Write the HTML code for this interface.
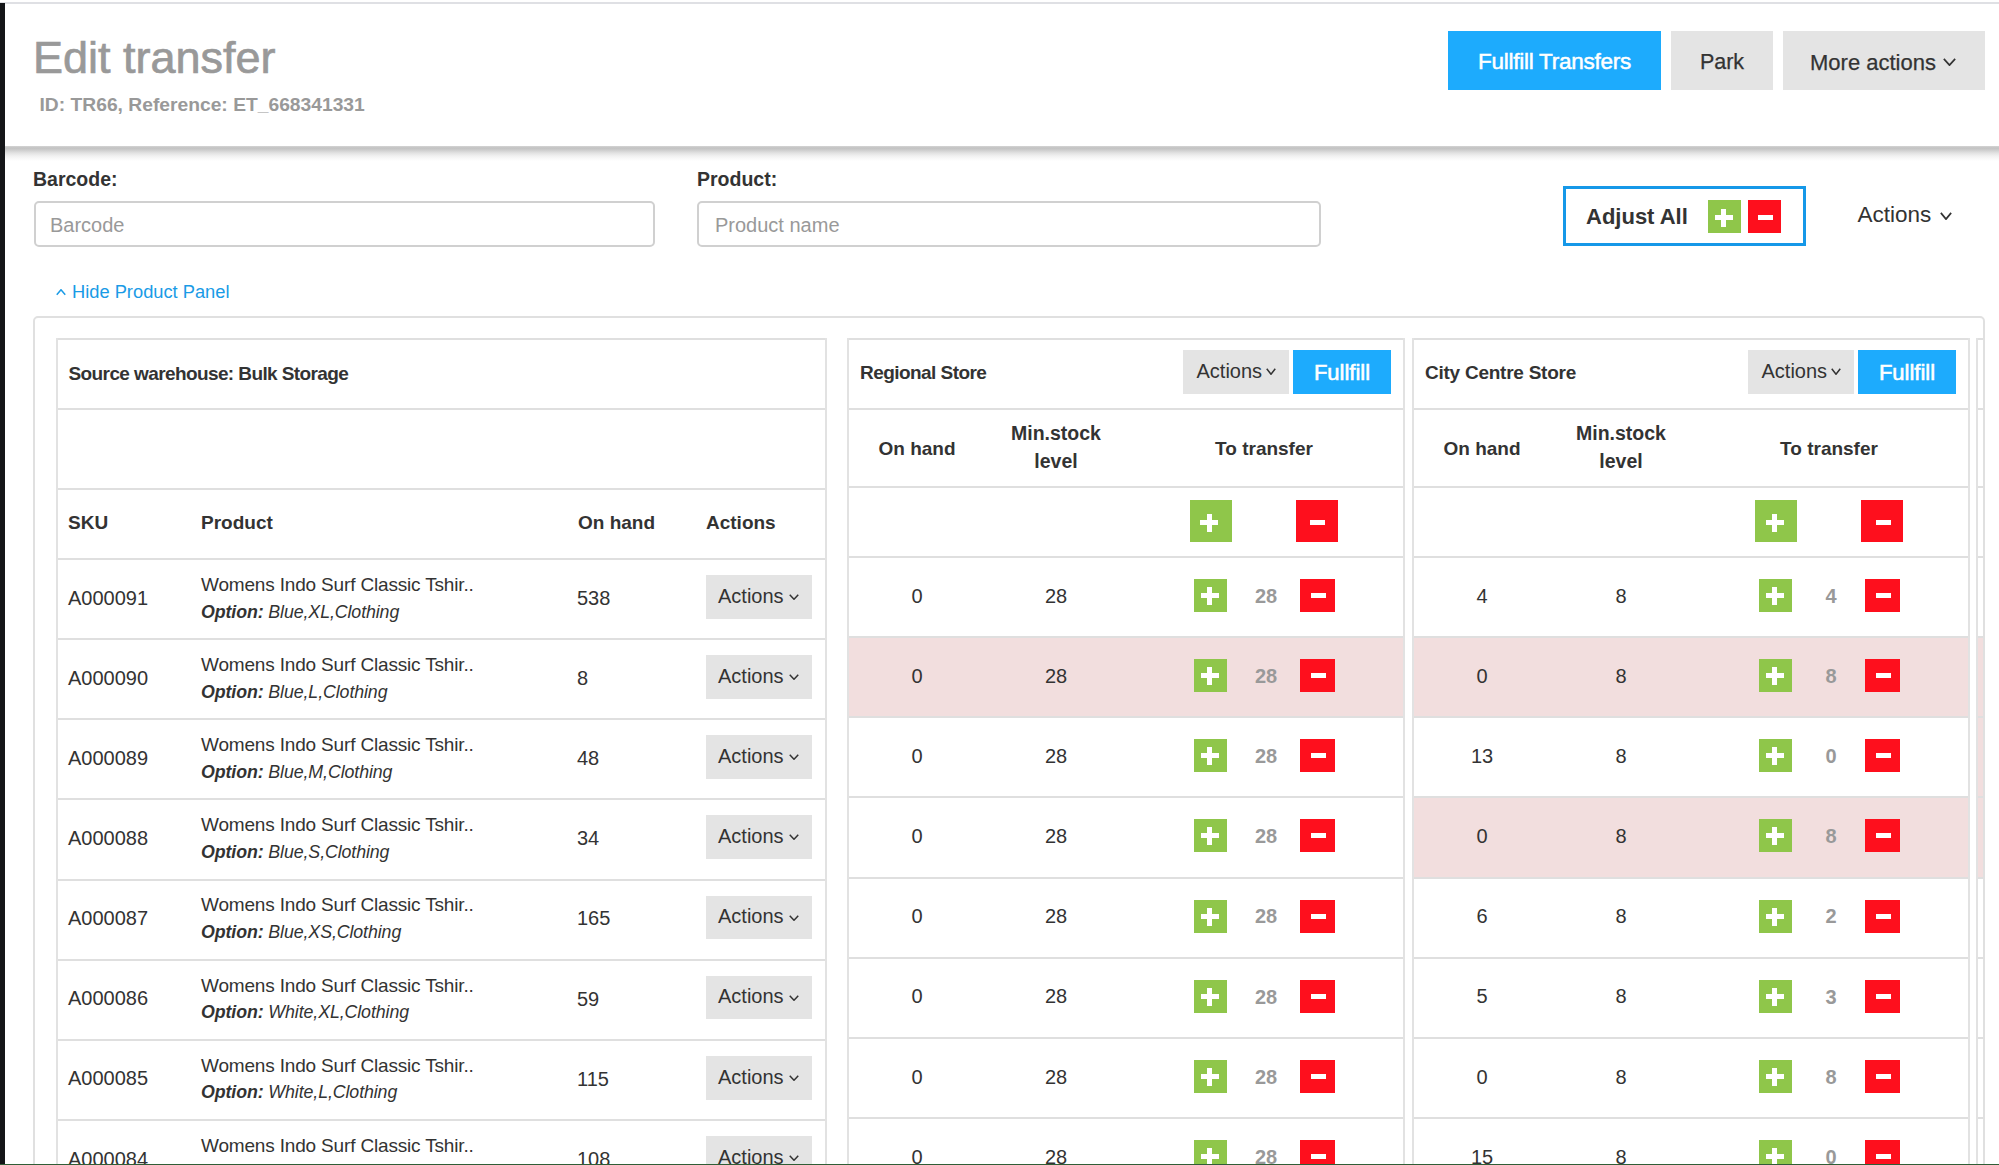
<!DOCTYPE html>
<html><head><meta charset="utf-8"><style>
html,body{margin:0;padding:0;}
body{width:1999px;height:1165px;overflow:hidden;position:relative;background:#fff;font-family:"Liberation Sans", sans-serif;color:#333;}
.t{position:absolute;white-space:nowrap;line-height:1;}
.r{position:absolute;}
</style></head><body>
<div class="r" style="left:0px;top:2px;width:1999px;height:2px;background:#dfe0e4;"></div>
<div class="r" style="left:5px;top:146px;width:1994px;height:15px;background:linear-gradient(#d4d4d4 0px,#c2c2c2 2px,#cdcdcd 4px,#e2e2e2 7px,#f1f1f1 10px,#fafafa 13px,#fff 15px);"></div>
<div class="t" style="left:33.00px;top:35.40px;font-size:45px;color:#999;-webkit-text-stroke:0.7px #999;">Edit transfer</div>
<div class="t" style="left:39.50px;top:95.00px;font-size:19.25px;font-weight:700;color:#999;">ID: TR66, Reference: ET_668341331</div>
<div class="r" style="left:1448px;top:31px;width:213px;height:59px;background:#1dabfd;"></div>
<div class="t" style="left:1448.00px;width:213px;text-align:center;top:51.25px;font-size:22.5px;color:#fff;letter-spacing:-0.25px;-webkit-text-stroke:0.5px #fff;">Fullfill Transfers</div>
<div class="r" style="left:1671px;top:31px;width:102px;height:59px;background:#e4e4e4;"></div>
<div class="t" style="left:1671.00px;width:102px;text-align:center;top:52.10px;font-size:21.5px;-webkit-text-stroke:0.25px #333;">Park</div>
<div class="r" style="left:1783px;top:31px;width:202px;height:59px;background:#e4e4e4;"></div>
<div class="t" style="left:1810.00px;top:51.67px;font-size:22px;-webkit-text-stroke:0.25px #333;">More actions</div>
<svg class="r" style="left:1943px;top:58px" width="13" height="8" viewBox="0 0 13 8"><path d="M0.85 0.85 L6.5 7.15 L12.15 0.85" fill="none" stroke="#333" stroke-width="1.7"/></svg>
<div class="t" style="left:33.00px;top:169.99px;font-size:19.5px;font-weight:700;">Barcode:</div>
<div class="r" style="left:34px;top:201px;width:621px;height:46px;background:#fff;box-sizing:border-box;border:2px solid #d0d0d0;border-radius:5px;"></div>
<div class="t" style="left:50.00px;top:215.07px;font-size:20px;color:#999;">Barcode</div>
<div class="t" style="left:697.00px;top:169.99px;font-size:19.5px;font-weight:700;">Product:</div>
<div class="r" style="left:697px;top:201px;width:624px;height:46px;background:#fff;box-sizing:border-box;border:2px solid #d0d0d0;border-radius:5px;"></div>
<div class="t" style="left:715.00px;top:215.07px;font-size:20px;color:#999;">Product name</div>
<div class="r" style="left:1563px;top:186px;width:243px;height:60px;background:transparent;box-sizing:border-box;border:3px solid #1598e8;"></div>
<div class="t" style="left:1586.00px;top:206.37px;font-size:22px;font-weight:700;">Adjust All</div>
<div class="r" style="left:1708px;top:200px;width:33px;height:33px;background:#8fc64a;"></div>
<div class="r" style="left:1715px;top:215px;width:18px;height:5px;background:#fff;"></div>
<div class="r" style="left:1721px;top:209px;width:5px;height:18px;background:#fff;"></div>
<div class="r" style="left:1748px;top:200px;width:33px;height:33px;background:#fe0f1d;"></div>
<div class="r" style="left:1758px;top:215px;width:15px;height:5px;background:#fff;"></div>
<div class="t" style="left:1857.50px;top:203.95px;font-size:22.5px;">Actions</div>
<svg class="r" style="left:1940px;top:212px" width="12" height="8" viewBox="0 0 12 8"><path d="M0.85 0.85 L6.0 7.15 L11.15 0.85" fill="none" stroke="#333" stroke-width="1.7"/></svg>
<svg class="r" style="left:56px;top:289px" width="10" height="6.5" viewBox="0 0 10 6.5"><path d="M0.75 5.75 L5.0 0.75 L9.25 5.75" fill="none" stroke="#1a9be6" stroke-width="1.5"/></svg>
<div class="t" style="left:72.00px;top:282.91px;font-size:18.3px;color:#1a9be6;">Hide Product Panel</div>
<div class="r" style="left:33px;top:316px;width:1952px;height:884px;background:#fff;box-sizing:border-box;border:2px solid #e0e0e0;border-radius:5px;"></div>
<div class="r" style="left:56px;top:338px;width:771px;height:2px;background:#dfdfdf;"></div>
<div class="r" style="left:56px;top:408px;width:771px;height:2px;background:#dfdfdf;"></div>
<div class="r" style="left:56px;top:488px;width:771px;height:2px;background:#dfdfdf;"></div>
<div class="r" style="left:56px;top:558px;width:771px;height:2px;background:#dfdfdf;"></div>
<div class="r" style="left:56px;top:638px;width:771px;height:2px;background:#dfdfdf;"></div>
<div class="r" style="left:56px;top:718px;width:771px;height:2px;background:#dfdfdf;"></div>
<div class="r" style="left:56px;top:798px;width:771px;height:2px;background:#dfdfdf;"></div>
<div class="r" style="left:56px;top:879px;width:771px;height:2px;background:#dfdfdf;"></div>
<div class="r" style="left:56px;top:959px;width:771px;height:2px;background:#dfdfdf;"></div>
<div class="r" style="left:56px;top:1039px;width:771px;height:2px;background:#dfdfdf;"></div>
<div class="r" style="left:56px;top:1119px;width:771px;height:2px;background:#dfdfdf;"></div>
<div class="r" style="left:56px;top:338px;width:2px;height:827px;background:#e2e2e2;"></div>
<div class="r" style="left:825px;top:338px;width:2px;height:827px;background:#e2e2e2;"></div>
<div class="t" style="left:68.50px;top:363.91px;font-size:19px;font-weight:700;letter-spacing:-0.6px;">Source warehouse: Bulk Storage</div>
<div class="t" style="left:68.00px;top:513.41px;font-size:19px;font-weight:700;">SKU</div>
<div class="t" style="left:201.00px;top:513.41px;font-size:19px;font-weight:700;">Product</div>
<div class="t" style="left:578.00px;top:513.41px;font-size:19px;font-weight:700;">On hand</div>
<div class="t" style="left:706.00px;top:513.41px;font-size:19px;font-weight:700;">Actions</div>
<div class="t" style="left:68.00px;top:587.57px;font-size:20px;">A000091</div>
<div class="t" style="left:201.00px;top:574.91px;font-size:19px;letter-spacing:-0.17px;">Womens Indo Surf Classic Tshir..</div>
<div class="t" style="left:201.00px;top:603.63px;font-size:17.8px;font-style:italic;letter-spacing:-0.1px;"><b>Option:</b> Blue,XL,Clothing</div>
<div class="t" style="left:577.00px;top:587.87px;font-size:20px;">538</div>
<div class="r" style="left:706px;top:575px;width:106px;height:44px;background:#e4e4e4;"></div>
<div class="t" style="left:718.00px;top:585.77px;font-size:20px;">Actions</div>
<svg class="r" style="left:789px;top:594px" width="10" height="6" viewBox="0 0 10 6"><path d="M0.75 0.75 L5.0 5.25 L9.25 0.75" fill="none" stroke="#333" stroke-width="1.5"/></svg>
<div class="t" style="left:68.00px;top:667.71px;font-size:20px;">A000090</div>
<div class="t" style="left:201.00px;top:655.05px;font-size:19px;letter-spacing:-0.17px;">Womens Indo Surf Classic Tshir..</div>
<div class="t" style="left:201.00px;top:683.77px;font-size:17.8px;font-style:italic;letter-spacing:-0.1px;"><b>Option:</b> Blue,L,Clothing</div>
<div class="t" style="left:577.00px;top:668.01px;font-size:20px;">8</div>
<div class="r" style="left:706px;top:655px;width:106px;height:44px;background:#e4e4e4;"></div>
<div class="t" style="left:718.00px;top:665.91px;font-size:20px;">Actions</div>
<svg class="r" style="left:789px;top:674px" width="10" height="6" viewBox="0 0 10 6"><path d="M0.75 0.75 L5.0 5.25 L9.25 0.75" fill="none" stroke="#333" stroke-width="1.5"/></svg>
<div class="t" style="left:68.00px;top:747.85px;font-size:20px;">A000089</div>
<div class="t" style="left:201.00px;top:735.19px;font-size:19px;letter-spacing:-0.17px;">Womens Indo Surf Classic Tshir..</div>
<div class="t" style="left:201.00px;top:763.91px;font-size:17.8px;font-style:italic;letter-spacing:-0.1px;"><b>Option:</b> Blue,M,Clothing</div>
<div class="t" style="left:577.00px;top:748.15px;font-size:20px;">48</div>
<div class="r" style="left:706px;top:735px;width:106px;height:44px;background:#e4e4e4;"></div>
<div class="t" style="left:718.00px;top:746.05px;font-size:20px;">Actions</div>
<svg class="r" style="left:789px;top:754px" width="10" height="6" viewBox="0 0 10 6"><path d="M0.75 0.75 L5.0 5.25 L9.25 0.75" fill="none" stroke="#333" stroke-width="1.5"/></svg>
<div class="t" style="left:68.00px;top:827.99px;font-size:20px;">A000088</div>
<div class="t" style="left:201.00px;top:815.33px;font-size:19px;letter-spacing:-0.17px;">Womens Indo Surf Classic Tshir..</div>
<div class="t" style="left:201.00px;top:844.05px;font-size:17.8px;font-style:italic;letter-spacing:-0.1px;"><b>Option:</b> Blue,S,Clothing</div>
<div class="t" style="left:577.00px;top:828.29px;font-size:20px;">34</div>
<div class="r" style="left:706px;top:815px;width:106px;height:44px;background:#e4e4e4;"></div>
<div class="t" style="left:718.00px;top:826.19px;font-size:20px;">Actions</div>
<svg class="r" style="left:789px;top:834px" width="10" height="6" viewBox="0 0 10 6"><path d="M0.75 0.75 L5.0 5.25 L9.25 0.75" fill="none" stroke="#333" stroke-width="1.5"/></svg>
<div class="t" style="left:68.00px;top:908.13px;font-size:20px;">A000087</div>
<div class="t" style="left:201.00px;top:895.47px;font-size:19px;letter-spacing:-0.17px;">Womens Indo Surf Classic Tshir..</div>
<div class="t" style="left:201.00px;top:924.19px;font-size:17.8px;font-style:italic;letter-spacing:-0.1px;"><b>Option:</b> Blue,XS,Clothing</div>
<div class="t" style="left:577.00px;top:908.43px;font-size:20px;">165</div>
<div class="r" style="left:706px;top:896px;width:106px;height:43px;background:#e4e4e4;"></div>
<div class="t" style="left:718.00px;top:906.33px;font-size:20px;">Actions</div>
<svg class="r" style="left:789px;top:915px" width="10" height="6" viewBox="0 0 10 6"><path d="M0.75 0.75 L5.0 5.25 L9.25 0.75" fill="none" stroke="#333" stroke-width="1.5"/></svg>
<div class="t" style="left:68.00px;top:988.27px;font-size:20px;">A000086</div>
<div class="t" style="left:201.00px;top:975.61px;font-size:19px;letter-spacing:-0.17px;">Womens Indo Surf Classic Tshir..</div>
<div class="t" style="left:201.00px;top:1004.33px;font-size:17.8px;font-style:italic;letter-spacing:-0.1px;"><b>Option:</b> White,XL,Clothing</div>
<div class="t" style="left:577.00px;top:988.57px;font-size:20px;">59</div>
<div class="r" style="left:706px;top:976px;width:106px;height:43px;background:#e4e4e4;"></div>
<div class="t" style="left:718.00px;top:986.47px;font-size:20px;">Actions</div>
<svg class="r" style="left:789px;top:995px" width="10" height="6" viewBox="0 0 10 6"><path d="M0.75 0.75 L5.0 5.25 L9.25 0.75" fill="none" stroke="#333" stroke-width="1.5"/></svg>
<div class="t" style="left:68.00px;top:1068.41px;font-size:20px;">A000085</div>
<div class="t" style="left:201.00px;top:1055.75px;font-size:19px;letter-spacing:-0.17px;">Womens Indo Surf Classic Tshir..</div>
<div class="t" style="left:201.00px;top:1084.47px;font-size:17.8px;font-style:italic;letter-spacing:-0.1px;"><b>Option:</b> White,L,Clothing</div>
<div class="t" style="left:577.00px;top:1068.71px;font-size:20px;">115</div>
<div class="r" style="left:706px;top:1056px;width:106px;height:44px;background:#e4e4e4;"></div>
<div class="t" style="left:718.00px;top:1066.61px;font-size:20px;">Actions</div>
<svg class="r" style="left:789px;top:1075px" width="10" height="6" viewBox="0 0 10 6"><path d="M0.75 0.75 L5.0 5.25 L9.25 0.75" fill="none" stroke="#333" stroke-width="1.5"/></svg>
<div class="t" style="left:68.00px;top:1148.55px;font-size:20px;">A000084</div>
<div class="t" style="left:201.00px;top:1135.89px;font-size:19px;letter-spacing:-0.17px;">Womens Indo Surf Classic Tshir..</div>
<div class="t" style="left:201.00px;top:1164.61px;font-size:17.8px;font-style:italic;letter-spacing:-0.1px;"><b>Option:</b> White,M,Clothing</div>
<div class="t" style="left:577.00px;top:1148.85px;font-size:20px;">108</div>
<div class="r" style="left:706px;top:1136px;width:106px;height:44px;background:#e4e4e4;"></div>
<div class="t" style="left:718.00px;top:1146.75px;font-size:20px;">Actions</div>
<svg class="r" style="left:789px;top:1155px" width="10" height="6" viewBox="0 0 10 6"><path d="M0.75 0.75 L5.0 5.25 L9.25 0.75" fill="none" stroke="#333" stroke-width="1.5"/></svg>
<div class="r" style="left:847px;top:638px;width:558px;height:78px;background:#f2dede;"></div>
<div class="r" style="left:847px;top:338px;width:558px;height:2px;background:#dfdfdf;"></div>
<div class="r" style="left:847px;top:408px;width:558px;height:2px;background:#dfdfdf;"></div>
<div class="r" style="left:847px;top:486px;width:558px;height:2px;background:#dfdfdf;"></div>
<div class="r" style="left:847px;top:556px;width:558px;height:2px;background:#dfdfdf;"></div>
<div class="r" style="left:847px;top:636px;width:558px;height:2px;background:#dfdfdf;"></div>
<div class="r" style="left:847px;top:716px;width:558px;height:2px;background:#dfdfdf;"></div>
<div class="r" style="left:847px;top:796px;width:558px;height:2px;background:#dfdfdf;"></div>
<div class="r" style="left:847px;top:877px;width:558px;height:2px;background:#dfdfdf;"></div>
<div class="r" style="left:847px;top:957px;width:558px;height:2px;background:#dfdfdf;"></div>
<div class="r" style="left:847px;top:1037px;width:558px;height:2px;background:#dfdfdf;"></div>
<div class="r" style="left:847px;top:1117px;width:558px;height:2px;background:#dfdfdf;"></div>
<div class="r" style="left:847px;top:338px;width:2px;height:827px;background:#e2e2e2;"></div>
<div class="r" style="left:1403px;top:338px;width:2px;height:827px;background:#e2e2e2;"></div>
<div class="t" style="left:860.00px;top:363.41px;font-size:19px;font-weight:700;letter-spacing:-0.55px;">Regional Store</div>
<div class="r" style="left:1183px;top:350px;width:106px;height:44px;background:#e4e4e4;"></div>
<div class="t" style="left:1196.50px;top:361.17px;font-size:20px;">Actions</div>
<svg class="r" style="left:1266px;top:368px" width="10" height="7" viewBox="0 0 10 7"><path d="M0.75 0.75 L5.0 6.25 L9.25 0.75" fill="none" stroke="#333" stroke-width="1.5"/></svg>
<div class="r" style="left:1293px;top:350px;width:98px;height:44px;background:#1dabfd;"></div>
<div class="t" style="left:1293.00px;width:98px;text-align:center;top:361.57px;font-size:22px;color:#fff;-webkit-text-stroke:0.6px #fff;">Fullfill</div>
<div class="t" style="left:847.00px;width:140px;text-align:center;top:438.51px;font-size:19px;font-weight:700;">On hand</div>
<div class="t" style="left:986.00px;width:140px;text-align:center;top:424.29px;font-size:19.5px;font-weight:700;">Min.stock</div>
<div class="t" style="left:986.00px;width:140px;text-align:center;top:452.29px;font-size:19.5px;font-weight:700;">level</div>
<div class="t" style="left:1164.00px;width:200px;text-align:center;top:438.51px;font-size:19px;font-weight:700;">To transfer</div>
<div class="r" style="left:1190px;top:500px;width:42px;height:42px;background:#8fc64a;"></div>
<div class="r" style="left:1200px;top:520px;width:18px;height:5px;background:#fff;"></div>
<div class="r" style="left:1207px;top:514px;width:5px;height:18px;background:#fff;"></div>
<div class="r" style="left:1296px;top:500px;width:42px;height:42px;background:#fe0f1d;"></div>
<div class="r" style="left:1310px;top:520px;width:15px;height:5px;background:#fff;"></div>
<div class="t" style="left:877.00px;width:80px;text-align:center;top:585.67px;font-size:20px;">0</div>
<div class="t" style="left:1016.00px;width:80px;text-align:center;top:585.67px;font-size:20px;">28</div>
<div class="r" style="left:1194px;top:579px;width:33px;height:33px;background:#8fc64a;"></div>
<div class="r" style="left:1201px;top:593px;width:18px;height:5px;background:#fff;"></div>
<div class="r" style="left:1207px;top:587px;width:5px;height:18px;background:#fff;"></div>
<div class="t" style="left:1236.00px;width:60px;text-align:center;top:585.87px;font-size:20px;font-weight:700;color:#999;">28</div>
<div class="r" style="left:1300px;top:579px;width:35px;height:33px;background:#fe0f1d;"></div>
<div class="r" style="left:1311px;top:593px;width:15px;height:5px;background:#fff;"></div>
<div class="t" style="left:877.00px;width:80px;text-align:center;top:665.81px;font-size:20px;">0</div>
<div class="t" style="left:1016.00px;width:80px;text-align:center;top:665.81px;font-size:20px;">28</div>
<div class="r" style="left:1194px;top:659px;width:33px;height:33px;background:#8fc64a;"></div>
<div class="r" style="left:1201px;top:673px;width:18px;height:5px;background:#fff;"></div>
<div class="r" style="left:1207px;top:667px;width:5px;height:18px;background:#fff;"></div>
<div class="t" style="left:1236.00px;width:60px;text-align:center;top:666.01px;font-size:20px;font-weight:700;color:#999;">28</div>
<div class="r" style="left:1300px;top:659px;width:35px;height:33px;background:#fe0f1d;"></div>
<div class="r" style="left:1311px;top:673px;width:15px;height:5px;background:#fff;"></div>
<div class="t" style="left:877.00px;width:80px;text-align:center;top:745.95px;font-size:20px;">0</div>
<div class="t" style="left:1016.00px;width:80px;text-align:center;top:745.95px;font-size:20px;">28</div>
<div class="r" style="left:1194px;top:739px;width:33px;height:33px;background:#8fc64a;"></div>
<div class="r" style="left:1201px;top:753px;width:18px;height:5px;background:#fff;"></div>
<div class="r" style="left:1207px;top:747px;width:5px;height:18px;background:#fff;"></div>
<div class="t" style="left:1236.00px;width:60px;text-align:center;top:746.15px;font-size:20px;font-weight:700;color:#999;">28</div>
<div class="r" style="left:1300px;top:739px;width:35px;height:33px;background:#fe0f1d;"></div>
<div class="r" style="left:1311px;top:753px;width:15px;height:5px;background:#fff;"></div>
<div class="t" style="left:877.00px;width:80px;text-align:center;top:826.09px;font-size:20px;">0</div>
<div class="t" style="left:1016.00px;width:80px;text-align:center;top:826.09px;font-size:20px;">28</div>
<div class="r" style="left:1194px;top:819px;width:33px;height:33px;background:#8fc64a;"></div>
<div class="r" style="left:1201px;top:833px;width:18px;height:5px;background:#fff;"></div>
<div class="r" style="left:1207px;top:827px;width:5px;height:18px;background:#fff;"></div>
<div class="t" style="left:1236.00px;width:60px;text-align:center;top:826.29px;font-size:20px;font-weight:700;color:#999;">28</div>
<div class="r" style="left:1300px;top:819px;width:35px;height:33px;background:#fe0f1d;"></div>
<div class="r" style="left:1311px;top:833px;width:15px;height:5px;background:#fff;"></div>
<div class="t" style="left:877.00px;width:80px;text-align:center;top:906.23px;font-size:20px;">0</div>
<div class="t" style="left:1016.00px;width:80px;text-align:center;top:906.23px;font-size:20px;">28</div>
<div class="r" style="left:1194px;top:900px;width:33px;height:33px;background:#8fc64a;"></div>
<div class="r" style="left:1201px;top:914px;width:18px;height:5px;background:#fff;"></div>
<div class="r" style="left:1207px;top:908px;width:5px;height:18px;background:#fff;"></div>
<div class="t" style="left:1236.00px;width:60px;text-align:center;top:906.43px;font-size:20px;font-weight:700;color:#999;">28</div>
<div class="r" style="left:1300px;top:900px;width:35px;height:33px;background:#fe0f1d;"></div>
<div class="r" style="left:1311px;top:914px;width:15px;height:5px;background:#fff;"></div>
<div class="t" style="left:877.00px;width:80px;text-align:center;top:986.37px;font-size:20px;">0</div>
<div class="t" style="left:1016.00px;width:80px;text-align:center;top:986.37px;font-size:20px;">28</div>
<div class="r" style="left:1194px;top:980px;width:33px;height:33px;background:#8fc64a;"></div>
<div class="r" style="left:1201px;top:994px;width:18px;height:5px;background:#fff;"></div>
<div class="r" style="left:1207px;top:988px;width:5px;height:18px;background:#fff;"></div>
<div class="t" style="left:1236.00px;width:60px;text-align:center;top:986.57px;font-size:20px;font-weight:700;color:#999;">28</div>
<div class="r" style="left:1300px;top:980px;width:35px;height:33px;background:#fe0f1d;"></div>
<div class="r" style="left:1311px;top:994px;width:15px;height:5px;background:#fff;"></div>
<div class="t" style="left:877.00px;width:80px;text-align:center;top:1066.51px;font-size:20px;">0</div>
<div class="t" style="left:1016.00px;width:80px;text-align:center;top:1066.51px;font-size:20px;">28</div>
<div class="r" style="left:1194px;top:1060px;width:33px;height:33px;background:#8fc64a;"></div>
<div class="r" style="left:1201px;top:1074px;width:18px;height:5px;background:#fff;"></div>
<div class="r" style="left:1207px;top:1068px;width:5px;height:18px;background:#fff;"></div>
<div class="t" style="left:1236.00px;width:60px;text-align:center;top:1066.71px;font-size:20px;font-weight:700;color:#999;">28</div>
<div class="r" style="left:1300px;top:1060px;width:35px;height:33px;background:#fe0f1d;"></div>
<div class="r" style="left:1311px;top:1074px;width:15px;height:5px;background:#fff;"></div>
<div class="t" style="left:877.00px;width:80px;text-align:center;top:1146.65px;font-size:20px;">0</div>
<div class="t" style="left:1016.00px;width:80px;text-align:center;top:1146.65px;font-size:20px;">28</div>
<div class="r" style="left:1194px;top:1140px;width:33px;height:33px;background:#8fc64a;"></div>
<div class="r" style="left:1201px;top:1154px;width:18px;height:5px;background:#fff;"></div>
<div class="r" style="left:1207px;top:1148px;width:5px;height:18px;background:#fff;"></div>
<div class="t" style="left:1236.00px;width:60px;text-align:center;top:1146.85px;font-size:20px;font-weight:700;color:#999;">28</div>
<div class="r" style="left:1300px;top:1140px;width:35px;height:33px;background:#fe0f1d;"></div>
<div class="r" style="left:1311px;top:1154px;width:15px;height:5px;background:#fff;"></div>
<div class="r" style="left:1412px;top:638px;width:558px;height:78px;background:#f2dede;"></div>
<div class="r" style="left:1412px;top:798px;width:558px;height:79px;background:#f2dede;"></div>
<div class="r" style="left:1412px;top:338px;width:558px;height:2px;background:#dfdfdf;"></div>
<div class="r" style="left:1412px;top:408px;width:558px;height:2px;background:#dfdfdf;"></div>
<div class="r" style="left:1412px;top:486px;width:558px;height:2px;background:#dfdfdf;"></div>
<div class="r" style="left:1412px;top:556px;width:558px;height:2px;background:#dfdfdf;"></div>
<div class="r" style="left:1412px;top:636px;width:558px;height:2px;background:#dfdfdf;"></div>
<div class="r" style="left:1412px;top:716px;width:558px;height:2px;background:#dfdfdf;"></div>
<div class="r" style="left:1412px;top:796px;width:558px;height:2px;background:#dfdfdf;"></div>
<div class="r" style="left:1412px;top:877px;width:558px;height:2px;background:#dfdfdf;"></div>
<div class="r" style="left:1412px;top:957px;width:558px;height:2px;background:#dfdfdf;"></div>
<div class="r" style="left:1412px;top:1037px;width:558px;height:2px;background:#dfdfdf;"></div>
<div class="r" style="left:1412px;top:1117px;width:558px;height:2px;background:#dfdfdf;"></div>
<div class="r" style="left:1412px;top:338px;width:2px;height:827px;background:#e2e2e2;"></div>
<div class="r" style="left:1968px;top:338px;width:2px;height:827px;background:#e2e2e2;"></div>
<div class="t" style="left:1425.00px;top:363.41px;font-size:19px;font-weight:700;letter-spacing:-0.25px;">City Centre Store</div>
<div class="r" style="left:1748px;top:350px;width:106px;height:44px;background:#e4e4e4;"></div>
<div class="t" style="left:1761.50px;top:361.17px;font-size:20px;">Actions</div>
<svg class="r" style="left:1831px;top:368px" width="10" height="7" viewBox="0 0 10 7"><path d="M0.75 0.75 L5.0 6.25 L9.25 0.75" fill="none" stroke="#333" stroke-width="1.5"/></svg>
<div class="r" style="left:1858px;top:350px;width:98px;height:44px;background:#1dabfd;"></div>
<div class="t" style="left:1858.00px;width:98px;text-align:center;top:361.57px;font-size:22px;color:#fff;-webkit-text-stroke:0.6px #fff;">Fullfill</div>
<div class="t" style="left:1412.00px;width:140px;text-align:center;top:438.51px;font-size:19px;font-weight:700;">On hand</div>
<div class="t" style="left:1551.00px;width:140px;text-align:center;top:424.29px;font-size:19.5px;font-weight:700;">Min.stock</div>
<div class="t" style="left:1551.00px;width:140px;text-align:center;top:452.29px;font-size:19.5px;font-weight:700;">level</div>
<div class="t" style="left:1729.00px;width:200px;text-align:center;top:438.51px;font-size:19px;font-weight:700;">To transfer</div>
<div class="r" style="left:1755px;top:500px;width:42px;height:42px;background:#8fc64a;"></div>
<div class="r" style="left:1766px;top:520px;width:18px;height:5px;background:#fff;"></div>
<div class="r" style="left:1772px;top:514px;width:5px;height:18px;background:#fff;"></div>
<div class="r" style="left:1861px;top:500px;width:42px;height:42px;background:#fe0f1d;"></div>
<div class="r" style="left:1876px;top:520px;width:15px;height:5px;background:#fff;"></div>
<div class="t" style="left:1442.00px;width:80px;text-align:center;top:585.67px;font-size:20px;">4</div>
<div class="t" style="left:1581.00px;width:80px;text-align:center;top:585.67px;font-size:20px;">8</div>
<div class="r" style="left:1759px;top:579px;width:33px;height:33px;background:#8fc64a;"></div>
<div class="r" style="left:1766px;top:593px;width:18px;height:5px;background:#fff;"></div>
<div class="r" style="left:1772px;top:587px;width:5px;height:18px;background:#fff;"></div>
<div class="t" style="left:1801.00px;width:60px;text-align:center;top:585.87px;font-size:20px;font-weight:700;color:#999;">4</div>
<div class="r" style="left:1865px;top:579px;width:35px;height:33px;background:#fe0f1d;"></div>
<div class="r" style="left:1876px;top:593px;width:15px;height:5px;background:#fff;"></div>
<div class="t" style="left:1442.00px;width:80px;text-align:center;top:665.81px;font-size:20px;">0</div>
<div class="t" style="left:1581.00px;width:80px;text-align:center;top:665.81px;font-size:20px;">8</div>
<div class="r" style="left:1759px;top:659px;width:33px;height:33px;background:#8fc64a;"></div>
<div class="r" style="left:1766px;top:673px;width:18px;height:5px;background:#fff;"></div>
<div class="r" style="left:1772px;top:667px;width:5px;height:18px;background:#fff;"></div>
<div class="t" style="left:1801.00px;width:60px;text-align:center;top:666.01px;font-size:20px;font-weight:700;color:#999;">8</div>
<div class="r" style="left:1865px;top:659px;width:35px;height:33px;background:#fe0f1d;"></div>
<div class="r" style="left:1876px;top:673px;width:15px;height:5px;background:#fff;"></div>
<div class="t" style="left:1442.00px;width:80px;text-align:center;top:745.95px;font-size:20px;">13</div>
<div class="t" style="left:1581.00px;width:80px;text-align:center;top:745.95px;font-size:20px;">8</div>
<div class="r" style="left:1759px;top:739px;width:33px;height:33px;background:#8fc64a;"></div>
<div class="r" style="left:1766px;top:753px;width:18px;height:5px;background:#fff;"></div>
<div class="r" style="left:1772px;top:747px;width:5px;height:18px;background:#fff;"></div>
<div class="t" style="left:1801.00px;width:60px;text-align:center;top:746.15px;font-size:20px;font-weight:700;color:#999;">0</div>
<div class="r" style="left:1865px;top:739px;width:35px;height:33px;background:#fe0f1d;"></div>
<div class="r" style="left:1876px;top:753px;width:15px;height:5px;background:#fff;"></div>
<div class="t" style="left:1442.00px;width:80px;text-align:center;top:826.09px;font-size:20px;">0</div>
<div class="t" style="left:1581.00px;width:80px;text-align:center;top:826.09px;font-size:20px;">8</div>
<div class="r" style="left:1759px;top:819px;width:33px;height:33px;background:#8fc64a;"></div>
<div class="r" style="left:1766px;top:833px;width:18px;height:5px;background:#fff;"></div>
<div class="r" style="left:1772px;top:827px;width:5px;height:18px;background:#fff;"></div>
<div class="t" style="left:1801.00px;width:60px;text-align:center;top:826.29px;font-size:20px;font-weight:700;color:#999;">8</div>
<div class="r" style="left:1865px;top:819px;width:35px;height:33px;background:#fe0f1d;"></div>
<div class="r" style="left:1876px;top:833px;width:15px;height:5px;background:#fff;"></div>
<div class="t" style="left:1442.00px;width:80px;text-align:center;top:906.23px;font-size:20px;">6</div>
<div class="t" style="left:1581.00px;width:80px;text-align:center;top:906.23px;font-size:20px;">8</div>
<div class="r" style="left:1759px;top:900px;width:33px;height:33px;background:#8fc64a;"></div>
<div class="r" style="left:1766px;top:914px;width:18px;height:5px;background:#fff;"></div>
<div class="r" style="left:1772px;top:908px;width:5px;height:18px;background:#fff;"></div>
<div class="t" style="left:1801.00px;width:60px;text-align:center;top:906.43px;font-size:20px;font-weight:700;color:#999;">2</div>
<div class="r" style="left:1865px;top:900px;width:35px;height:33px;background:#fe0f1d;"></div>
<div class="r" style="left:1876px;top:914px;width:15px;height:5px;background:#fff;"></div>
<div class="t" style="left:1442.00px;width:80px;text-align:center;top:986.37px;font-size:20px;">5</div>
<div class="t" style="left:1581.00px;width:80px;text-align:center;top:986.37px;font-size:20px;">8</div>
<div class="r" style="left:1759px;top:980px;width:33px;height:33px;background:#8fc64a;"></div>
<div class="r" style="left:1766px;top:994px;width:18px;height:5px;background:#fff;"></div>
<div class="r" style="left:1772px;top:988px;width:5px;height:18px;background:#fff;"></div>
<div class="t" style="left:1801.00px;width:60px;text-align:center;top:986.57px;font-size:20px;font-weight:700;color:#999;">3</div>
<div class="r" style="left:1865px;top:980px;width:35px;height:33px;background:#fe0f1d;"></div>
<div class="r" style="left:1876px;top:994px;width:15px;height:5px;background:#fff;"></div>
<div class="t" style="left:1442.00px;width:80px;text-align:center;top:1066.51px;font-size:20px;">0</div>
<div class="t" style="left:1581.00px;width:80px;text-align:center;top:1066.51px;font-size:20px;">8</div>
<div class="r" style="left:1759px;top:1060px;width:33px;height:33px;background:#8fc64a;"></div>
<div class="r" style="left:1766px;top:1074px;width:18px;height:5px;background:#fff;"></div>
<div class="r" style="left:1772px;top:1068px;width:5px;height:18px;background:#fff;"></div>
<div class="t" style="left:1801.00px;width:60px;text-align:center;top:1066.71px;font-size:20px;font-weight:700;color:#999;">8</div>
<div class="r" style="left:1865px;top:1060px;width:35px;height:33px;background:#fe0f1d;"></div>
<div class="r" style="left:1876px;top:1074px;width:15px;height:5px;background:#fff;"></div>
<div class="t" style="left:1442.00px;width:80px;text-align:center;top:1146.65px;font-size:20px;">15</div>
<div class="t" style="left:1581.00px;width:80px;text-align:center;top:1146.65px;font-size:20px;">8</div>
<div class="r" style="left:1759px;top:1140px;width:33px;height:33px;background:#8fc64a;"></div>
<div class="r" style="left:1766px;top:1154px;width:18px;height:5px;background:#fff;"></div>
<div class="r" style="left:1772px;top:1148px;width:5px;height:18px;background:#fff;"></div>
<div class="t" style="left:1801.00px;width:60px;text-align:center;top:1146.85px;font-size:20px;font-weight:700;color:#999;">0</div>
<div class="r" style="left:1865px;top:1140px;width:35px;height:33px;background:#fe0f1d;"></div>
<div class="r" style="left:1876px;top:1154px;width:15px;height:5px;background:#fff;"></div>
<div class="r" style="left:1976px;top:638px;width:558px;height:78px;background:#f2dede;"></div>
<div class="r" style="left:1976px;top:718px;width:558px;height:78px;background:#f2dede;"></div>
<div class="r" style="left:1976px;top:798px;width:558px;height:79px;background:#f2dede;"></div>
<div class="r" style="left:1976px;top:338px;width:558px;height:2px;background:#dfdfdf;"></div>
<div class="r" style="left:1976px;top:408px;width:558px;height:2px;background:#dfdfdf;"></div>
<div class="r" style="left:1976px;top:486px;width:558px;height:2px;background:#dfdfdf;"></div>
<div class="r" style="left:1976px;top:556px;width:558px;height:2px;background:#dfdfdf;"></div>
<div class="r" style="left:1976px;top:636px;width:558px;height:2px;background:#dfdfdf;"></div>
<div class="r" style="left:1976px;top:716px;width:558px;height:2px;background:#dfdfdf;"></div>
<div class="r" style="left:1976px;top:796px;width:558px;height:2px;background:#dfdfdf;"></div>
<div class="r" style="left:1976px;top:877px;width:558px;height:2px;background:#dfdfdf;"></div>
<div class="r" style="left:1976px;top:957px;width:558px;height:2px;background:#dfdfdf;"></div>
<div class="r" style="left:1976px;top:1037px;width:558px;height:2px;background:#dfdfdf;"></div>
<div class="r" style="left:1976px;top:1117px;width:558px;height:2px;background:#dfdfdf;"></div>
<div class="r" style="left:1976px;top:338px;width:2px;height:827px;background:#e2e2e2;"></div>
<div class="r" style="left:2532px;top:338px;width:2px;height:827px;background:#e2e2e2;"></div>
<div class="r" style="left:0px;top:3px;width:5px;height:1161px;background:#141518;"></div>
<div class="r" style="left:0px;top:1164px;width:1999px;height:1px;background:#2f5e36;"></div>
<div class="r" style="left:1985px;top:330px;width:14px;height:834px;background:#fff;"></div>
<div class="r" style="left:1983px;top:330px;width:2px;height:834px;background:#e0e0e0;"></div>
</body></html>
